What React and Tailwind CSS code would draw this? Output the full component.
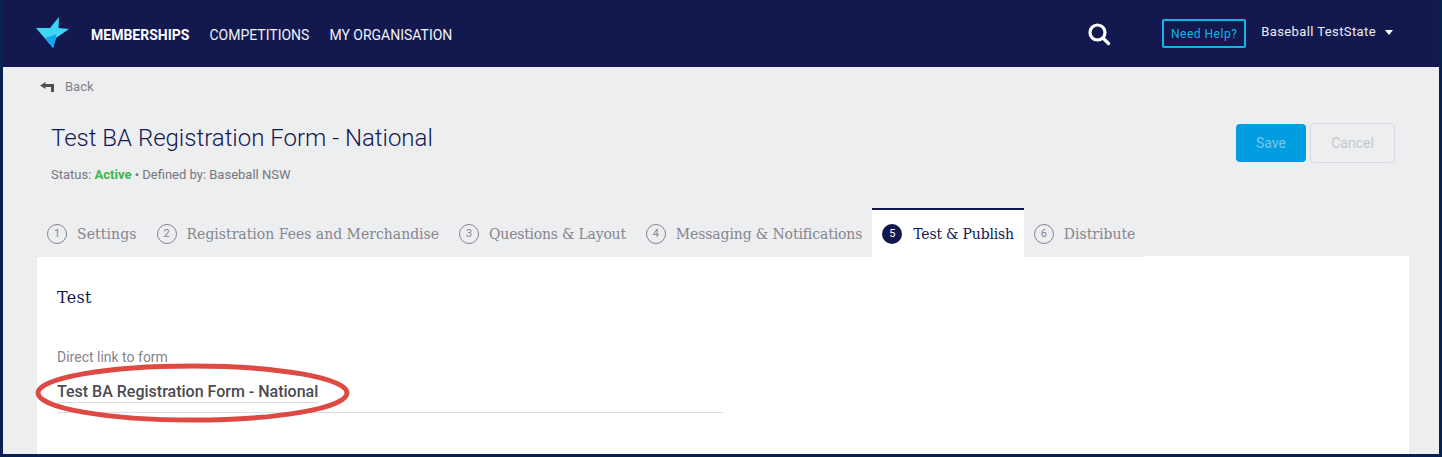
const Slab = "font-['DejaVu_Serif','Liberation_Serif',serif]";

function Logo() {
  return (
    <svg width="34" height="32" viewBox="0 0 34 32" className="shrink-0">
      <path d="M0 11 L14 11 L23 0 L22.5 11 L33 12 L20 21 L17 31 Z" fill="#3fd6f6" />
      <path d="M9 21 L20 17.5 L20 21 L17 31 Z" fill="#14a3ef" />
    </svg>
  );
}

function Tab({ n, label, active, className = "", track = "" }) {
  return (
    <div className={`flex items-center h-[49px] ${active ? "bg-white border-t-2 border-[#13184f] pt-[1px] px-[10px] text-[#13184f]" : "pt-[3px] text-[#85858f] " + className}`}>
      <span className={`w-[20px] h-[20px] rounded-full flex items-center justify-center text-[11px] font-['Roboto',sans-serif] ${active ? "mr-[11px] bg-[#13184f] text-white" : "mr-[10px] border border-[#85858f]"}`}>
        {n}
      </span>
      <span className={`${Slab} text-[14px] ${track}`}>{label}</span>
    </div>
  );
}

export default function App() {
  return (
    <div className="w-[1442px] h-[457px] bg-[#0a2050] pl-[3px] pr-[3px] pb-[3px] overflow-hidden font-['Roboto',sans-serif]">
      <div className="relative h-[454px] bg-[#edeef0] flex flex-col overflow-hidden">
        <header className="h-[67px] shrink-0 bg-[#13194f] flex items-center pl-[33px] pr-[46px]">
          <div className="-mt-[1px]"><Logo /></div>
          <nav className="flex items-center gap-[20px] ml-[21px] mt-[4px] text-[14px] text-[#f2f3f7]">
            <span className="font-bold text-white">MEMBERSHIPS</span>
            <span>COMPETITIONS</span>
            <span>MY ORGANISATION</span>
          </nav>
          <svg width="24" height="24" viewBox="0 0 24 24" className="ml-auto mr-[51px]" fill="none" stroke="white" strokeLinecap="round">
            <circle cx="10.5" cy="10.5" r="7.5" strokeWidth="3.2" />
            <path d="M16 16 L21.5 21.5" strokeWidth="3.2" />
          </svg>
          <div className="w-[84px] h-[29px] border-2 border-[#12b5e6] rounded-[2px] flex items-center justify-center text-[12px] text-[#12b5e6] tracking-[0.5px]">
            Need Help?
          </div>
          <span className="ml-[15px] text-[13px] text-[#eceef5] tracking-[0.4px] -mt-[4px]">Baseball TestState</span>
          <span className="ml-[9px] -mt-[3px] w-0 h-0 border-l-[4px] border-r-[4px] border-t-[5px] border-l-transparent border-r-transparent border-t-white" />
        </header>

        <div className="flex items-center h-[39px] pl-[37px] text-[13px] text-[#7f7f86]">
          <svg width="14" height="10" viewBox="0 0 14 10" fill="#505050">
            <path d="M0 3.5 L5.5 0 V2 H14 V10 H11 V5 H5.5 V7 Z" />
          </svg>
          <span className="ml-[11px]">Back</span>
        </div>

        <div className="flex justify-between pl-[48px] pr-[44px]">
          <div>
            <h1 className="text-[24px] leading-[32px] font-light text-[#13194f] mt-[16px]">Test BA Registration Form - National</h1>
            <p className="text-[13px] leading-[16px] mt-[13px] text-[#77777e]">
              Status: <span className="font-bold text-[#3fb54a]">Active</span> • Defined by: Baseball NSW
            </p>
          </div>
          <div className="flex items-start gap-[4px] mt-[17px]">
            <div className="w-[70px] h-[38px] mt-[1px] rounded-[4px] bg-[#009ee0] flex items-center justify-center text-[14px] text-[#7cc8ea]">Save</div>
            <div className="w-[85px] h-[40px] rounded-[4px] border border-[#d9dade] flex items-center justify-center text-[14px] text-[#c6c7cc]">Cancel</div>
          </div>
        </div>

        <div className="flex items-end mt-[25px] pl-[44px] relative z-10">
          <Tab n="1" label="Settings" className="mr-[20px]" track="tracking-[0.1px]" />
          <Tab n="2" label="Registration Fees and Merchandise" className="mr-[20px]" />
          <Tab n="3" label="Questions & Layout" className="mr-[20px]" track="tracking-[-0.22px]" />
          <Tab n="4" label="Messaging & Notifications" className="mr-[10px]" track="tracking-[-0.12px]" />
          <Tab n="5" label="Test & Publish" active track="tracking-[-0.2px]" />
          <Tab n="6" label="Distribute" className="ml-[10px]" />
        </div>

        <main className="flex-1 ml-[34px] mr-[30px] bg-white pl-[20px] relative">
          <div className="absolute left-[1108px] right-0 -top-[1px] h-[1px] bg-white" />
          <h2 className={`${Slab} text-[16px] leading-[24px] mt-[29px] text-[#13194f] tracking-[0.3px]`}>Test</h2>
          <div className="text-[14px] leading-[16px] mt-[39px] text-[#85858c]">Direct link to form</div>
          <div className="w-[666px] h-[46px] mt-[2px] border-b border-[#d8dde8] flex items-start">
            <span className="text-[16px] leading-[20px] mt-[15px] font-medium text-[#4b4b4f] border-b border-[#d8dde8]">Test BA Registration Form - National</span>
          </div>
        </main>

        <svg width="320" height="64" viewBox="0 0 320 64" fill="none" className="absolute left-[30px] top-[361px] pointer-events-none z-20">
          <ellipse cx="159.5" cy="32" rx="154.5" ry="27" stroke="#dd4a44" strokeWidth="5" />
        </svg>
      </div>
    </div>
  );
}
